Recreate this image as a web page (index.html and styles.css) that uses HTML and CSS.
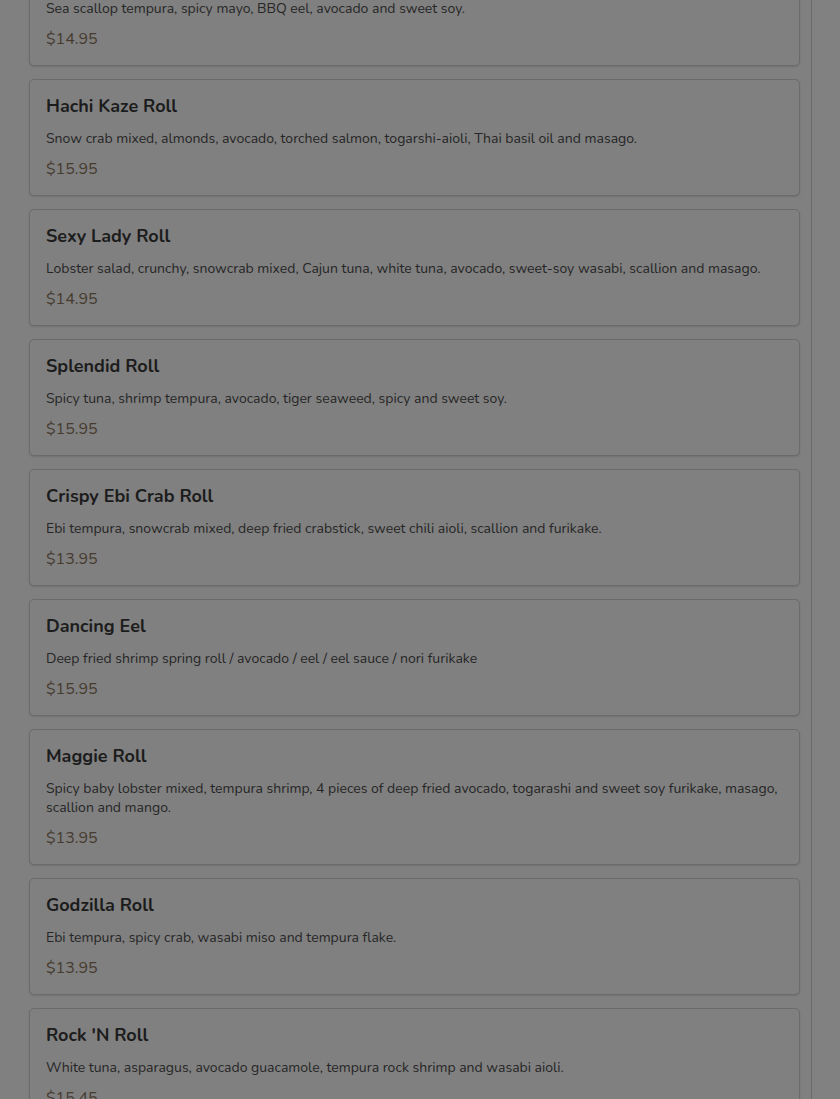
FILE: index.html
```html
<!DOCTYPE html>
<html lang="en">
<head>
<meta charset="utf-8">
<title>Rolls</title>
<link rel="stylesheet" href="styles.css">
</head>
<body>
<div class="page">
  <div class="list">
    <div class="card">
      <h3 class="name">Scallop Roll</h3>
      <p class="desc">Sea scallop tempura, spicy mayo, BBQ eel, avocado and sweet soy.</p>
      <div class="price">$14.95</div>
    </div>
    <div class="card">
      <h3 class="name">Hachi Kaze Roll</h3>
      <p class="desc">Snow crab mixed, almonds, avocado, torched salmon, togarshi-aioli, Thai basil oil and masago.</p>
      <div class="price">$15.95</div>
    </div>
    <div class="card">
      <h3 class="name">Sexy Lady Roll</h3>
      <p class="desc">Lobster salad, crunchy, snowcrab mixed, Cajun tuna, white tuna, avocado, sweet-soy wasabi, scallion and masago.</p>
      <div class="price">$14.95</div>
    </div>
    <div class="card">
      <h3 class="name">Splendid Roll</h3>
      <p class="desc">Spicy tuna, shrimp tempura, avocado, tiger seaweed, spicy and sweet soy.</p>
      <div class="price">$15.95</div>
    </div>
    <div class="card">
      <h3 class="name">Crispy Ebi Crab Roll</h3>
      <p class="desc">Ebi tempura, snowcrab mixed, deep fried crabstick, sweet chili aioli, scallion and furikake.</p>
      <div class="price">$13.95</div>
    </div>
    <div class="card">
      <h3 class="name">Dancing Eel</h3>
      <p class="desc">Deep fried shrimp spring roll / avocado / eel / eel sauce / nori furikake</p>
      <div class="price">$15.95</div>
    </div>
    <div class="card">
      <h3 class="name">Maggie Roll</h3>
      <p class="desc">Spicy baby lobster mixed, tempura shrimp, 4 pieces of deep fried avocado, togarashi and sweet soy furikake, masago, scallion and mango.</p>
      <div class="price">$13.95</div>
    </div>
    <div class="card">
      <h3 class="name">Godzilla Roll</h3>
      <p class="desc">Ebi tempura, spicy crab, wasabi miso and tempura flake.</p>
      <div class="price">$13.95</div>
    </div>
    <div class="card">
      <h3 class="name">Rock 'N Roll</h3>
      <p class="desc">White tuna, asparagus, avocado guacamole, tempura rock shrimp and wasabi aioli.</p>
      <div class="price">$15.45</div>
    </div>
  </div>
</div>
</body>
</html>
```

FILE: styles.css
```css
html, body {
  margin: 0;
  padding: 0;
  background: #818181;
  height: 100%;
  overflow: hidden;
}

body {
  font-family: "Nunito", "Lato", "Open Sans", sans-serif;
  color: #222222;
}

.page {
  width: 812px;
  min-height: 100%;
  background: #808080;
  border-right: 1px solid #6c6c6c;
  box-sizing: border-box;
  padding: 0 11px 0 29px;
}

.list {
  display: flex;
  flex-direction: column;
  gap: 13px;
  margin-top: -51px;
}

.card {
  background: #808080;
  border: 1px solid #6b6b6b;
  border-radius: 5px;
  box-shadow: 0 1px 2px rgba(0, 0, 0, 0.12);
  padding: 14px 16px 15px 16px;
}

.name {
  margin: 0;
  font-size: 18px;
  line-height: 24px;
  font-weight: 700;
  color: #1c1c1c;
}

.desc {
  margin: 11px 0 0 0;
  font-size: 14px;
  line-height: 19px;
  color: #262626;
}

.price {
  margin-top: 10px;
  font-size: 16px;
  line-height: 22px;
  color: #463b2f;
}
```
